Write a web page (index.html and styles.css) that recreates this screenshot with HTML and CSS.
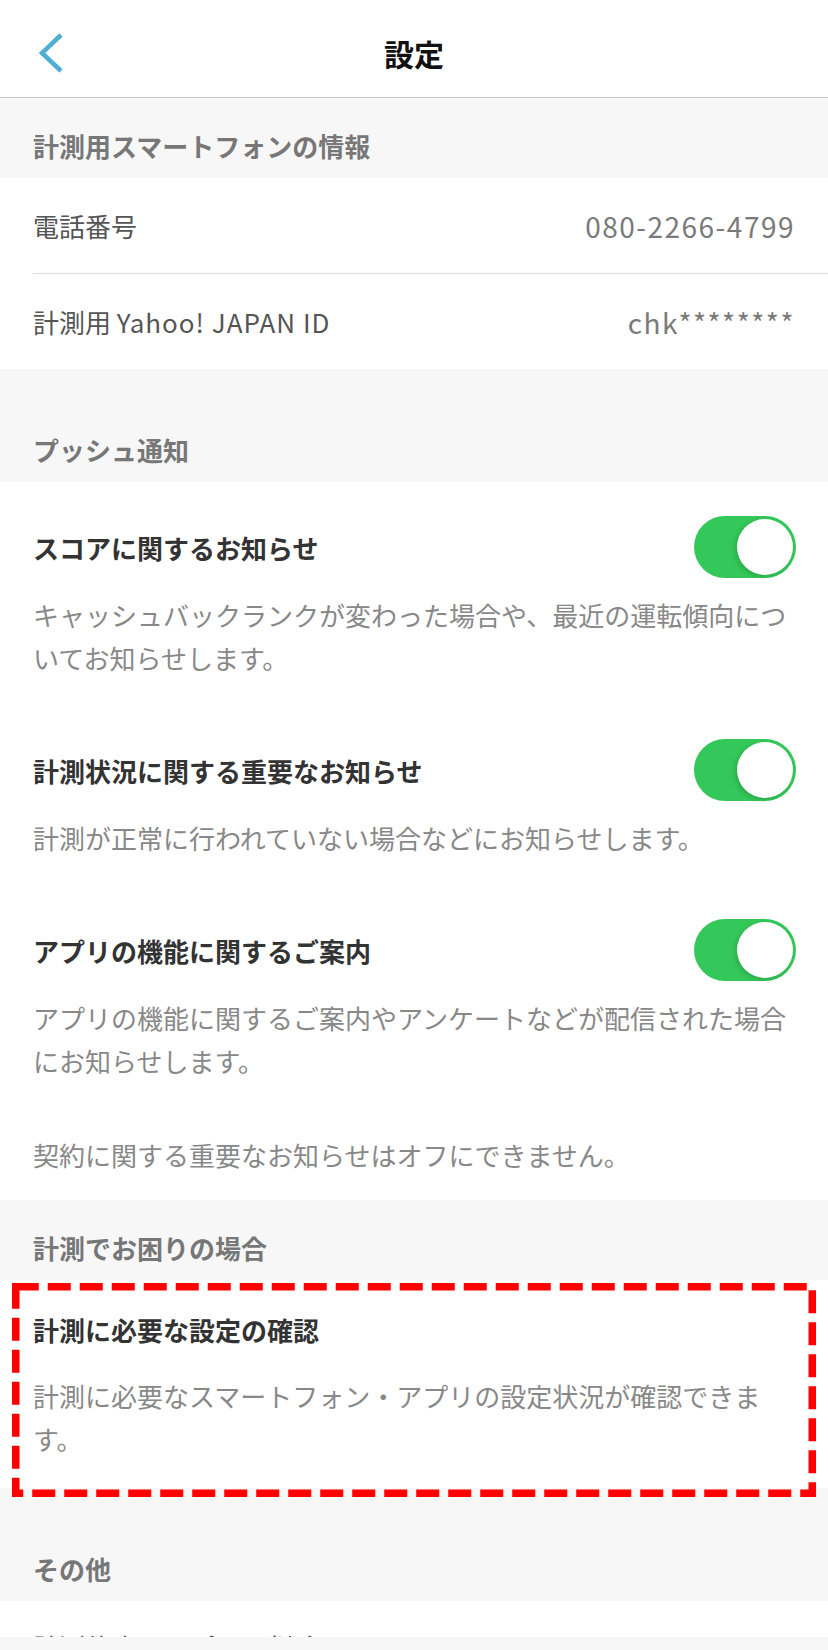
FILE: index.html
```html
<!DOCTYPE html>
<html lang="ja">
<head>
    <meta charset="UTF-8">
    <meta name="viewport" content="width=device-width, initial-scale=1.0">
    <title>設定</title>
    <link rel="stylesheet" href="styles.css">
</head>
<body>
    <header class="nav">
        <a class="nav-back" href="#">
            <svg width="26" height="42" viewBox="0 0 26 42">
                <polyline points="22,3 3,21 22,39" fill="none" stroke="#4fafd2" stroke-width="4.5" stroke-linejoin="miter"/>
            </svg>
        </a>
        <h1 class="nav-title">設定</h1>
        <span></span>
    </header>

    <main>
        <h2 class="section-title">計測用スマートフォンの情報</h2>
        <div class="group group-info">
            <div class="info-row">
                <span class="info-label">電話番号</span>
                <span class="info-value">080-2266-4799</span>
            </div>
            <div class="info-row">
                <span class="info-label">計測用 <span class="latin">Yahoo! JAPAN ID</span></span>
                <span class="info-value">chk********</span>
            </div>
        </div>

        <h2 class="section-title section-title-spaced">プッシュ通知</h2>
        <div class="group">
            <div class="notice">
                <div class="notice-head">
                    <span class="notice-title">スコアに関するお知らせ</span>
                    <span class="switch"></span>
                </div>
                <p class="notice-desc">キャッシュバックランクが変わった場合や、最近の運転傾向についてお知らせします。</p>
            </div>
            <div class="notice">
                <div class="notice-head">
                    <span class="notice-title">計測状況に関する重要なお知らせ</span>
                    <span class="switch"></span>
                </div>
                <p class="notice-desc">計測が正常に行われていない場合などにお知らせします。</p>
            </div>
            <div class="notice">
                <div class="notice-head">
                    <span class="notice-title">アプリの機能に関するご案内</span>
                    <span class="switch"></span>
                </div>
                <p class="notice-desc">アプリの機能に関するご案内やアンケートなどが配信された場合にお知らせします。</p>
            </div>
            <p class="group-note">契約に関する重要なお知らせはオフにできません。</p>
        </div>

        <h2 class="section-title">計測でお困りの場合</h2>
        <div class="group">
            <div class="link-row">
                <div class="link-title">計測に必要な設定の確認</div>
                <p class="notice-desc link-desc">計測に必要なスマートフォン・アプリの設定状況が確認できます。</p>
                <!-- annotation box -->
                <svg class="mark" width="804" height="214" viewBox="0 0 804 214">
                    <rect x="3.75" y="3.75" width="796.5" height="206.5" fill="none" stroke="#ff0000" stroke-width="7.5" stroke-dasharray="23 9"/>
                </svg>
            </div>
        </div>

        <h2 class="section-title section-title-spaced">その他</h2>
        <div class="group">
            <div class="link-row link-row-last">
                <div class="link-plain">計測停止とアプリの削除</div>
            </div>
        </div>
    </main>

    <div class="home-bar"></div>
</body>
</html>
```

FILE: styles.css
```css
/* Base */
body {
    font-family: "Noto Sans CJK JP", "Noto Sans", sans-serif;
    margin: 0;
    padding: 0;
    background-color: #f7f7f7;
    color: #333;
}

h1, h2, p {
    margin: 0;
}

/* Navigation bar */
.nav {
    display: grid;
    grid-template-columns: 1fr auto 1fr;
    align-items: center;
    height: 89px;
    padding-top: 8px;
    background: white;
    border-bottom: 1px solid #c4c4c4;
}

.nav-back {
    display: flex;
    padding-left: 39px;
}

.nav-title {
    font-size: 30px;
    font-weight: bold;
    color: #111;
    line-height: 40px;
}

/* Section headers */
.section-title {
    padding: 32px 33px 16px;
    font-size: 26px;
    line-height: 32px;
    font-weight: bold;
    color: #777;
}

.section-title-spaced {
    padding-top: 65px;
}

.group {
    background: white;
}

/* Info rows */
.group-info {
    padding-left: 33px;
}

.info-row {
    display: flex;
    justify-content: space-between;
    align-items: center;
    height: 95px;
    padding-right: 33px;
}

.info-row + .info-row {
    border-top: 1px solid #dcdcdc;
}

.info-label {
    font-size: 26px;
    color: #555;
}

.info-label .latin {
    letter-spacing: 1px;
}

.info-value {
    font-size: 28px;
    letter-spacing: 1.5px;
    color: #7a7a7a;
}

/* Notification items */
.notice {
    padding: 34px 33px 26px;
}

.notice-head {
    display: flex;
    justify-content: space-between;
    align-items: center;
    height: 62px;
}

.notice-title, .link-title {
    font-size: 26px;
    line-height: 43px;
    font-weight: bold;
    color: #333;
}

.notice-desc {
    margin-top: 15px;
    font-size: 26px;
    line-height: 43px;
    color: #888;
}

.group-note {
    padding: 25px 33px 24px;
    font-size: 26px;
    line-height: 43px;
    color: #888;
}

.switch {
    position: relative;
    flex: none;
    width: 102px;
    height: 62px;
    margin-right: -1px;
    border-radius: 31px;
    background-color: #34c759;
}

.switch::after {
    content: "";
    position: absolute;
    top: 3px;
    right: 3px;
    width: 56px;
    height: 56px;
    border-radius: 50%;
    background: white;
    box-shadow: -2px 2px 5px rgba(0, 0, 0, 0.15);
}

/* Link rows */
.link-row {
    position: relative;
    padding: 28px 33px;
}

.link-desc {
    margin-top: 23px;
}

.mark {
    position: absolute;
    left: 12px;
    top: 3px;
}

.link-row-last {
    padding-top: 24px;
    height: 13px;
}

.link-plain {
    font-size: 26px;
    line-height: 43px;
    color: #555;
}

.home-bar {
    position: fixed;
    left: 0;
    right: 0;
    bottom: 0;
    height: 13px;
    background: #f7f7f7;
}
```
